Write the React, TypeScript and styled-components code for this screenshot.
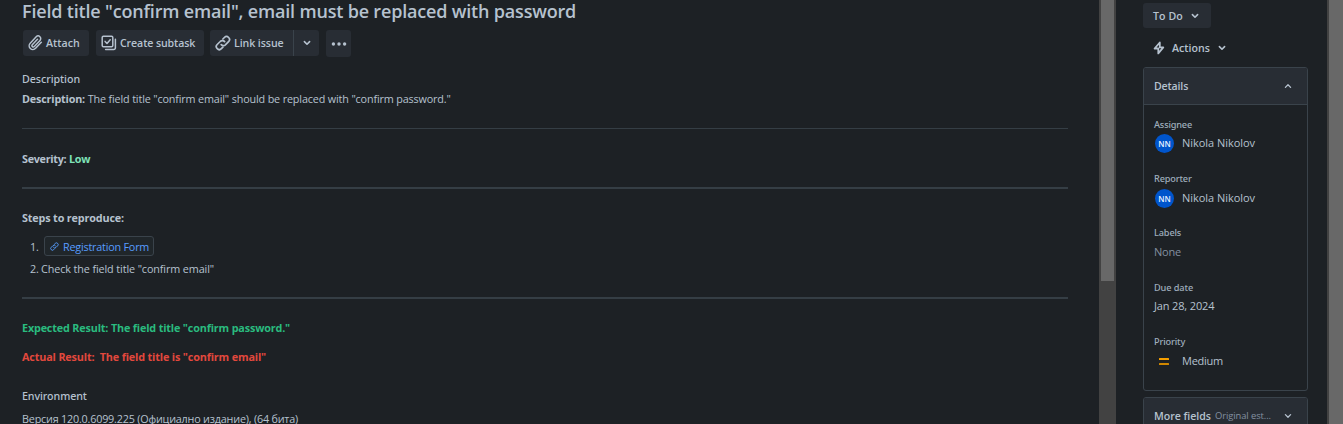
import React from 'react';
import styled, { createGlobalStyle } from 'styled-components';

const color = {
  bg: '#1d2125',
  raised: '#282d34',
  text: '#b6c2cf',
  subtle: '#9fadbc',
  faint: '#8390a0',
  border: '#3a434b',
  rule: '#353e45',
  link: '#579dff',
  mint: '#7ee2b8',
  green: '#2abb7f',
  red: '#e2483d',
};

const medium = `font-family: "Noto Sans", sans-serif; font-weight: 500;`;
const semibold = `font-family: "Open Sans", sans-serif; font-weight: 600;`;

const GlobalStyle = createGlobalStyle`
  * { box-sizing: border-box; }
  body {
    margin: 0;
    overflow: hidden;
    background: ${color.bg};
    color: ${color.text};
    font: 400 10.8px/16px "Open Sans", "Noto Sans", sans-serif;
  }
`;

const Page = styled.div`
  display: flex;
  width: 1343px;
  height: 424px;
  overflow: hidden;
`;

const Main = styled.main`
  flex: none;
  width: 1099px;
  padding: 0 31px 0 22px;
  white-space: pre;
`;

const ScrollTrack = styled.div<{ $w: number; $flush?: boolean }>`
  flex: none;
  width: ${p => p.$w}px;
  height: 424px;
  padding: 0 ${p => (p.$flush ? 0 : 2)}px 0 2px;
  background: #424242;
`;

const ScrollThumb = styled.div<{ $h: number }>`
  height: ${p => p.$h}px;
  background: #686868;
`;

const Title = styled.h1`
  ${semibold}
  margin: 0;
  font-size: 18px;
  line-height: 22px;
  letter-spacing: -0.18px;
`;

const Toolbar = styled.div`
  display: flex;
  align-items: flex-start;
  margin: 8px 0 0 1px;
`;

const Button = styled.button<{ $w: number; $ls: number; $gap?: number }>`
  ${semibold}
  display: flex;
  align-items: center;
  width: ${p => p.$w}px;
  height: 26px;
  margin: 0 ${p => p.$gap ?? 0}px 0 0;
  padding: 0 0 0 5px;
  border: 0;
  border-radius: 3px;
  background: ${color.raised};
  color: ${color.text};
  font-size: 10.6px;
  letter-spacing: ${p => p.$ls}px;
  white-space: nowrap;
`;

const SplitMain = styled(Button)`
  border-radius: 3px 0 0 3px;
`;

const IconButton = styled.button<{ $h: number; $split?: boolean }>`
  display: flex;
  align-items: center;
  justify-content: center;
  width: ${p => (p.$split ? 26 : 25)}px;
  height: ${p => p.$h}px;
  margin-right: 7px;
  padding: 0;
  border: 0;
  border-left: ${p => (p.$split ? `1px solid ${color.border}` : '0')};
  border-radius: ${p => (p.$split ? '0 3px 3px 0' : '3px')};
  background: ${color.raised};
  color: ${color.text};
`;

const Icon = styled.svg<{ $mr?: number }>`
  flex: none;
  display: block;
  margin-right: ${p => p.$mr ?? 0}px;
  fill: none;
  stroke: currentColor;
  stroke-linecap: round;
  stroke-linejoin: round;
`;

const SectionLabel = styled.h2<{ $top: number; $ls: number }>`
  ${medium}
  margin: ${p => p.$top}px 0 0;
  font-size: 10.7px;
  line-height: 16px;
  letter-spacing: ${p => p.$ls}px;
`;

const Para = styled.p<{ $top: number; $ls: number }>`
  margin: ${p => p.$top}px 0 0;
  letter-spacing: ${p => p.$ls}px;
`;

const Strong = styled.strong<{ $ls: number; $color?: string }>`
  font-weight: 700;
  letter-spacing: ${p => p.$ls}px;
  color: ${p => p.$color ?? 'inherit'};
`;

const Rule = styled.hr<{ $top: number; $h: number }>`
  height: ${p => p.$h}px;
  margin: ${p => p.$top}px 0 0;
  border: 0;
  background: ${color.rule};
`;

const Steps = styled.ol`
  margin: 10px 0 0 8px;
  padding: 0;
  list-style: none;
`;

const Step = styled.li`
  display: flex;
  align-items: center;
  height: 20px;
  letter-spacing: -0.109px;

  & + & {
    height: 16px;
    margin-top: 5px;
  }
`;

const Marker = styled.span<{ $w: number; $drop?: number }>`
  width: ${p => p.$w}px;
  padding-top: ${p => p.$drop ?? 0}px;
`;

const SmartLink = styled.a`
  display: flex;
  align-items: center;
  width: 110px;
  height: 20px;
  padding: 1px 0 0 5px;
  border: 1px solid ${color.border};
  border-radius: 3px;
  background: #20262a;
  color: ${color.link};
  letter-spacing: -0.21px;
`;

const Side = styled.aside`
  flex: none;
  width: 211px;
  padding: 3px 0 0 27px;
`;

const StatusButton = styled(Button)`
  height: 25px;
  padding-left: 10px;
`;

const ActionsButton = styled(Button)`
  height: 26px;
  margin-top: 7px;
  padding-left: 10px;
  background: transparent;
`;

const Card = styled.section<{ $top: number; $h: number }>`
  width: 165px;
  height: ${p => p.$h}px;
  margin-top: ${p => p.$top}px;
  border: 1px solid ${color.border};
  border-radius: 3px;
  overflow: hidden;
`;

const CardHeader = styled.header<{ $ls: number }>`
  ${semibold}
  display: flex;
  align-items: center;
  height: 37px;
  padding: 0 15px 0 10px;
  border-bottom: 1px solid ${color.border};
  background: ${color.raised};
  font-size: 10.6px;
  letter-spacing: ${p => p.$ls}px;
`;

const CardTitle = styled.span`
  margin-right: auto;
`;

const MoreTitle = styled.span`
  width: 57px;
  margin-right: 4px;
`;

const MoreHint = styled.span`
  margin-right: auto;
  color: ${color.faint};
  font: 400 9.4px/16px "Open Sans", sans-serif;
  letter-spacing: -0.08px;
`;

const FieldLabel = styled.div<{ $top: number; $ls: number }>`
  ${medium}
  margin: ${p => p.$top}px 0 0 10px;
  color: ${color.subtle};
  font-size: 9.2px;
  line-height: 14px;
  letter-spacing: ${p => p.$ls}px;
`;

const FieldValue = styled.div<{ $top?: number; $ls: number; $muted?: boolean }>`
  display: flex;
  align-items: center;
  height: 20px;
  margin: ${p => p.$top ?? 0}px 0 0 10px;
  color: ${p => (p.$muted ? color.faint : color.text)};
  font-size: 11px;
  letter-spacing: ${p => p.$ls}px;
`;

const Avatar = styled.span`
  display: flex;
  align-items: center;
  justify-content: center;
  width: 19px;
  height: 19px;
  margin: 0 8px 0 1px;
  border-radius: 50%;
  background: #0055cc;
  color: #e9f2ff;
  font: 600 8px/19px "Open Sans", sans-serif;
  letter-spacing: 0;
`;

const PriorityMark = styled.span`
  display: flex;
  flex-direction: column;
  gap: 3px;
  width: 10px;
  margin: 0 13px 0 5px;

  &::before,
  &::after {
    content: '';
    height: 2px;
    border-radius: 0.5px;
    background: #f59f00;
  }
  &::after {
    background: #cf8600;
  }
`;

const Chevron = ({ up = false, muted = false }: { up?: boolean; muted?: boolean }) => (
  <Icon width="8" height="6" viewBox="0 0 8 6" strokeWidth={muted ? 1.3 : 1.6}>
    <path d={up ? 'M1.4 4.4 4 1.8l2.6 2.6' : 'M1.4 1.6 4 4.2l2.6-2.6'} />
  </Icon>
);

const ClipIcon = () => (
  <Icon $mr={3} width="15" height="16" viewBox="0 0 15 16" strokeWidth="1.5">
    <path d="M13.3 7.2 7.6 13.3a3.7 3.7 0 0 1-5.4-5.1l6-6.4a2.6 2.6 0 0 1 3.8 3.6l-5.7 6.1a1.3 1.3 0 0 1-2-1.8l5.2-5.5" />
  </Icon>
);

const SubtaskIcon = () => (
  <Icon $mr={3} width="16" height="16" viewBox="0 0 16 16" strokeWidth="1.5">
    <rect x="1.2" y="1.2" width="10.6" height="10.6" rx="1.2" />
    <path d="m4.1 6.4 1.9 2 3.2-3.7M14.4 4.2v8.6a1.6 1.6 0 0 1-1.6 1.6H4.6" />
  </Icon>
);

const LinkIcon = ({ size = 16, mr = 3 }: { size?: number; mr?: number }) => (
  <Icon $mr={mr} width={size} height={size} viewBox="0 0 16 16" strokeWidth="1.7">
    <path d="M6.2 9.6a2.9 2.9 0 0 0 4.4.1l3-3a2.95 2.95 0 0 0-4.2-4.2L7.9 4" />
    <path d="M9.6 6.6a2.9 2.9 0 0 0-4.4-.1l-3 3a2.95 2.95 0 0 0 4.2 4.2l1.5-1.5" />
  </Icon>
);

const BoltIcon = () => (
  <Icon $mr={7} width="12" height="14" viewBox="0 0 12 14" strokeWidth="1.8">
    <path d="M6.8 1.5 1.6 7.5h3.7v4.9l5-6H6.8z" />
  </Icon>
);

const DotsIcon = () => (
  <Icon width="16" height="4" viewBox="0 0 16 4">
    <g fill="currentColor" stroke="none">
      <circle cx="2.4" cy="2" r="1.7" />
      <circle cx="8" cy="2" r="1.7" />
      <circle cx="13.6" cy="2" r="1.7" />
    </g>
  </Icon>
);

const ButtonText = styled.span<{ $w: number }>`
  width: ${p => p.$w}px;
  text-align: left;
`;

export default function App() {
  return (
    <>
      <GlobalStyle />
      <Page>
        <Main>
          <Title>Field title "confirm email", email must be replaced with password</Title>
          <Toolbar>
            <Button $w={66} $ls={0.05} $gap={7}><ClipIcon />Attach</Button>
            <Button $w={108} $ls={-0.1} $gap={6}><SubtaskIcon />Create subtask</Button>
            <SplitMain $w={83} $ls={-0.08}><LinkIcon />Link issue</SplitMain>
            <IconButton $h={26} $split><Chevron /></IconButton>
            <IconButton $h={27}><DotsIcon /></IconButton>
          </Toolbar>

          <SectionLabel $top={14} $ls={-0.05}>Description</SectionLabel>
          <Para $top={4} $ls={-0.149}>
            <Strong $ls={-0.181}>Description:</Strong> The field title "confirm email" should be replaced with "confirm password."
          </Para>
          <Rule $top={21} $h={1} />
          <Para $top={22} $ls={-0.2}>
            <Strong $ls={-0.3}>Severity:</Strong> <Strong $ls={-0.18} $color={color.mint}>Low</Strong>
          </Para>
          <Rule $top={20} $h={2} />
          <Para $top={21} $ls={0}><Strong $ls={-0.15}>Steps to reproduce:</Strong></Para>
          <Steps>
            <Step><Marker $w={14} $drop={2}>1.</Marker><SmartLink><LinkIcon size={9} mr={4} />Registration Form</SmartLink></Step>
            <Step><Marker $w={11}>2.</Marker>Check the field title "confirm email"</Step>
          </Steps>
          <Rule $top={20} $h={2} />
          <Para $top={21} $ls={0}>
            <Strong $ls={-0.157} $color={color.green}>Expected Result: The field title "confirm password."</Strong>
          </Para>
          <Para $top={13} $ls={0}>
            <Strong $ls={-0.147} $color={color.red}>{'Actual Result:  The field title is "confirm email"'}</Strong>
          </Para>
          <SectionLabel $top={23} $ls={-0.08}>Environment</SectionLabel>
          <Para $top={7} $ls={-0.202}>Версия 120.0.6099.225 (Официално издание), (64 бита)</Para>
        </Main>

        <ScrollTrack $w={17}><ScrollThumb $h={281} /></ScrollTrack>

        <Side>
          <StatusButton $w={68} $ls={0.1}><ButtonText $w={38}>To Do</ButtonText><Chevron /></StatusButton>
          <ActionsButton $w={100} $ls={0.03}><BoltIcon /><ButtonText $w={46}>Actions</ButtonText><Chevron /></ActionsButton>

          <Card $top={6} $h={324}>
            <CardHeader $ls={-0.16}><CardTitle>Details</CardTitle><Chevron up muted /></CardHeader>
            <FieldLabel $top={13} $ls={-0.17}>Assignee</FieldLabel>
            <FieldValue $top={1} $ls={-0.04}><Avatar>NN</Avatar>Nikola Nikolov</FieldValue>
            <FieldLabel $top={19} $ls={-0.17}>Reporter</FieldLabel>
            <FieldValue $top={2} $ls={-0.04}><Avatar>NN</Avatar>Nikola Nikolov</FieldValue>
            <FieldLabel $top={18} $ls={-0.16}>Labels</FieldLabel>
            <FieldValue $top={2} $ls={-0.2} $muted>None</FieldValue>
            <FieldLabel $top={19} $ls={-0.1}>Due date</FieldLabel>
            <FieldValue $top={1} $ls={-0.15}>Jan 28, 2024</FieldValue>
            <FieldLabel $top={19} $ls={-0.14}>Priority</FieldLabel>
            <FieldValue $top={2} $ls={-0.25}><PriorityMark />Medium</FieldValue>
          </Card>

          <Card $top={6} $h={38}>
            <CardHeader $ls={-0.04}>
              <MoreTitle>More fields</MoreTitle><MoreHint>Original est...</MoreHint><Chevron muted />
            </CardHeader>
          </Card>
        </Side>

        <ScrollTrack $w={16} $flush><ScrollThumb $h={424} /></ScrollTrack>
      </Page>
    </>
  );
}
